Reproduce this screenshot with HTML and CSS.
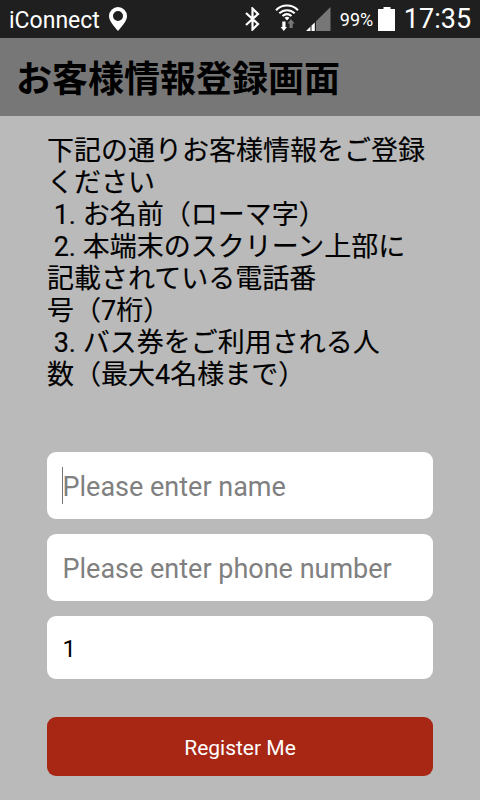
FILE: index.html
```html
<!DOCTYPE html>
<html lang="ja">
<head>
<meta charset="utf-8">
<title>iConnect</title>
<link rel="stylesheet" href="styles.css">
</head>
<body>
<div class="status">
  <span class="carrier">iConnect</span>
  <svg class="pin" width="18" height="24" viewBox="0 0 18 24"><path fill="#fff" fill-rule="evenodd" d="M9 0a9 9 0 0 1 9 9c0 5-5 10-9 15C5 19 0 14 0 9a9 9 0 0 1 9-9zm0 4a5 5 0 1 0 0 10A5 5 0 0 0 9 4z"/></svg>
  <svg class="bluetooth" width="15" height="24" viewBox="0 0 15 24"><path fill="none" stroke="#fff" stroke-width="2.200" d="M1 6l12 11-5.500 5.500V1.500L13 7 1 18"/></svg>
  <svg class="wifi" width="24" height="28" viewBox="0 0 24 28"><g fill="none" stroke="#fff" stroke-width="2"><path d="M1 6.200c6-6.200 16-6.200 22 0"/><path d="M4.300 9.300c4.500-4.200 10.900-4.200 15.400 0"/><path d="M7.500 12.100c2.700-2.400 6.300-2.400 9 0"/></g><path fill="#fff" d="M9.500 13.800q2.500-2 5 0L12 16.500zM7.300 17.500h3.200v5.500H12l-3.200 4-3.200-4h1.700z"/><path fill="#777" d="M16 15l3.700 4.500h-2V24h-3.200v-4.500h-2z"/></svg>
  <svg class="signal" width="25" height="24" viewBox="0 0 25 24"><path fill="#777" d="M10 14.300L24.500 0v24H10z"/><path fill="#fff" d="M0 24l4.500-4.500V24zM5.500 24v-5.500l3.300-3V24z"/></svg>
  <span class="percent">99%</span>
  <svg class="battery" width="18" height="24" viewBox="0 0 18 24"><path fill="#fff" d="M5.500 0h7v2H17v22H0V2h5.500z"/></svg>
  <span class="clock">17:35</span>
</div>
<header class="title">お客様情報登録画面</header>
<main class="content">
  <div class="info">
    <div>下記の通りお客様情報をご登録</div>
    <div>ください</div>
    <div> 1. お名前（ローマ字）</div>
    <div> 2. 本端末のスクリーン上部に</div>
    <div>記載されている電話番</div>
    <div>号（7桁）</div>
    <div> 3. バス券をご利用される人</div>
    <div>数（最大4名様まで）</div>
  </div>
  <div class="field focused"><i class="caret"></i><span>Please enter name</span></div>
  <div class="field"><span>Please enter phone number</span></div>
  <div class="field count"><span>1</span></div>
  <div class="button">Register Me</div>
</main>
</body>
</html>
```
FILE: styles.css
```css
* { box-sizing: border-box; }
body {
  margin: 0;
  width: 480px;
  height: 800px;
  overflow: hidden;
  background: #bababa;
  color: #000;
  font-family: Roboto, "Noto Sans CJK JP", sans-serif;
}
.status {
  display: flex;
  align-items: center;
  height: 38px;
  padding: 0 9px;
  background: #1f1f1f;
  color: #fff;
  white-space: nowrap;
}
.status svg { flex: none; }
.carrier { width: 91px; margin-right: 9px; font-size: 23px; padding-top: 2px; }
.bluetooth { margin-left: 118px; }
.wifi { margin-left: 15px; margin-top: -2px; }
.signal { margin-left: 7px; }
.percent { width: 33px; margin-left: 9px; font-size: 18px; padding-top: 1px; }
.battery { margin-left: 5px; }
.clock { margin-left: 8px; font-size: 27px; }
.title {
  height: 78px;
  padding-left: 16px;
  background: #777;
  font-size: 36px;
  line-height: 84px;
  font-weight: 700;
  white-space: nowrap;
}
.content { padding: 19px 47px 0; }
.info {
  height: 317px;
  font-size: 27px;
  line-height: 32px;
  -webkit-text-stroke: 0.15px #000;
}
.info div { height: 32px; white-space: pre; }
.field {
  position: relative;
  display: flex;
  align-items: center;
  height: 67px;
  margin-bottom: 15px;
  padding-left: 15.500px;
  border-radius: 9px;
  background: #fff;
  color: #808080;
  font-size: 27px;
  white-space: nowrap;
}
.field span { padding-top: 2px; }
.caret {
  position: absolute;
  left: 15px;
  top: 15px;
  width: 1px;
  height: 37px;
  background: #777;
}
.count { height: 63px; margin-bottom: 38px; color: #000; font-size: 24px; }
.button {
  height: 59px;
  border-radius: 9px;
  background: #a72714;
  color: #fff;
  font-size: 21px;
  line-height: 62px;
  text-align: center;
}
```
